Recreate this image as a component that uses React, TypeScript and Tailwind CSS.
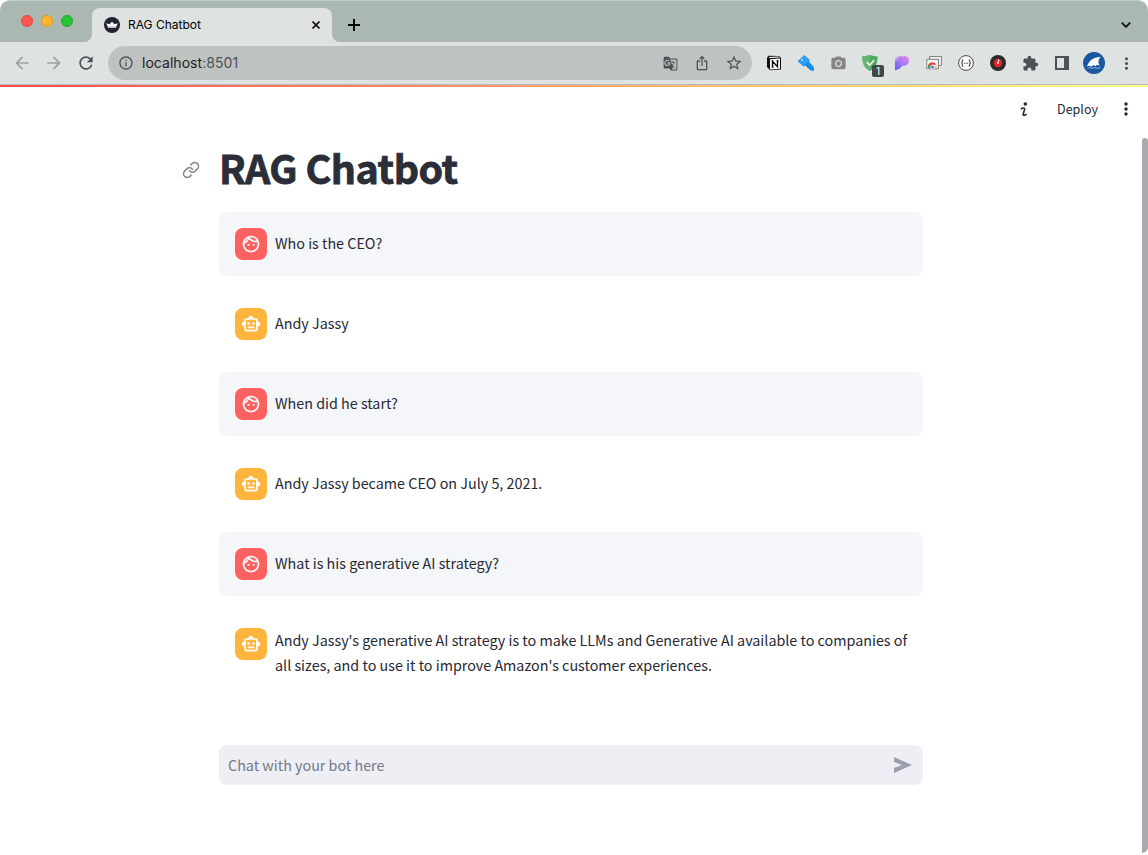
import React from "react";
import {
  MdArrowBack,
  MdArrowForward,
  MdExtension,
  MdGTranslate,
  MdInfoOutline,
  MdIosShare,
  MdMoreVert,
  MdOutlineFace,
  MdOutlineSmartToy,
  MdPhotoCamera,
  MdRefresh,
  MdStarBorder,
} from "react-icons/md";

type Message = {
  role: "user" | "assistant";
  text: string;
};

const messages: Message[] = [
  { role: "user", text: "Who is the CEO?" },
  { role: "assistant", text: "Andy Jassy" },
  { role: "user", text: "When did he start?" },
  { role: "assistant", text: "Andy Jassy became CEO on July 5, 2021." },
  { role: "user", text: "What is his generative AI strategy?" },
  {
    role: "assistant",
    text: "Andy Jassy's generative AI strategy is to make LLMs and Generative AI available to companies of all sizes, and to use it to improve Amazon's customer experiences.",
  },
];

const Cell: React.FC<{ children: React.ReactNode }> = ({ children }) => (
  <div className="flex h-8 w-8 shrink-0 items-center justify-center">
    {children}
  </div>
);

const TabStrip: React.FC = () => (
  <div className="flex h-[42px] shrink-0 items-end rounded-t-[10px] border-t border-[#c3cdc8] bg-[#abb8b1]">
    <div className="flex h-[41px] w-[92px] items-center gap-2 pb-px pl-[21px]">
      <span className="h-3 w-3 rounded-full border border-[#e2463f] bg-[#ff5650]" />
      <span className="h-3 w-3 rounded-full border border-[#e09a1f] bg-[#ffb429]" />
      <span className="h-3 w-3 rounded-full border border-[#1fa82c] bg-[#28c137]" />
    </div>

    {/* Active tab */}
    <div className="relative flex h-[34px] w-[240px] items-center rounded-t-lg bg-[#dee2e0] pl-3">
      <svg className="absolute bottom-0 -left-2 h-2 w-2" viewBox="0 0 8 8">
        <path d="M8 0v8H0a8 8 0 0 0 8-8z" fill="#dee2e0" />
      </svg>
      <svg className="absolute -right-2 bottom-0 h-2 w-2" viewBox="0 0 8 8">
        <path d="M0 0v8h8a8 8 0 0 1-8-8z" fill="#dee2e0" />
      </svg>
      <svg className="h-4 w-4" viewBox="0 0 16 16">
        <circle cx="8" cy="8" r="8" fill="#22252e" />
        <path
          d="M2.3 6.2 5.4 7.2 8 4.7l2.6 2.5 3.1-1-1.8 4.6H4.1z"
          fill="#fff"
        />
        <path d="M4 9.3h8l-.5 1.6h-7z" fill="#c4c8cb" />
      </svg>
      <span className="ml-2 flex-1 text-[12px] text-black">RAG Chatbot</span>
      <svg className="mr-3 h-2 w-2" viewBox="0 0 8 8">
        <path d="m.5.5 7 7m0-7-7 7" stroke="#111" strokeWidth="1.6" />
      </svg>
    </div>

    <div className="flex h-[34px] flex-1 items-center justify-between pr-[17px] pl-4">
      <svg className="h-3 w-3" viewBox="0 0 12 12">
        <path d="M6 0v12M0 6h12" stroke="#000" strokeWidth="2" />
      </svg>
      <svg className="h-[6px] w-[10px]" viewBox="0 0 10 6">
        <path d="m.8.7 4.2 4.2L9.2.7" fill="none" stroke="#111" strokeWidth="1.8" />
      </svg>
    </div>
  </div>
);

const Extensions: React.FC = () => (
  <div className="ml-[6px] flex">
    <Cell>
      <svg className="h-4 w-4" viewBox="0 0 16 16">
        <path d="M1 2.4 2.6.8 13 1l2 2v11.5l-11 .8L1 12z" fill="#111" />
        <path d="M4 4.2 14 3.6v10.2l-10 .6z" fill="#fff" />
        <path d="m2.4 1.9 9.8-.4 1.4.9L4 3z" fill="#fff" />
        <path
          d="M6.5 12V6.2l5 5.5V5.8M5.6 6h1.8M10.6 5.8h1.9M5.6 12.1h2"
          fill="none"
          stroke="#111"
          strokeWidth="1.4"
        />
      </svg>
    </Cell>
    <Cell>
      <svg className="h-4 w-4" viewBox="0 0 16 16">
        <path d="M6.2.2 11.8 5l-.8 2 4.800 5 .2 3.800-3.400-.4-5.200-5-1.800 1L-.2 6.300z" fill="#1487dd" />
        <path d="M6.2.2 11.6 5 5.5 11-.2 6.300z" fill="#2aa0f5" />
        <path d="m9.500 8.300 5.800 5.900" stroke="#1f97ee" strokeWidth="1.400" />
        <circle cx="4" cy="5" r=".9" fill="#dee2e0" />
      </svg>
    </Cell>
    <Cell>
      <MdPhotoCamera className="h-[17px] w-[17px] text-[#858585]" />
    </Cell>
    <div className="relative flex h-8 w-8 items-center justify-center">
      <svg className="h-4 w-4" viewBox="0 0 16 16">
        <path
          d="M8 0c2.800.8 5 1.300 7.700 1.600C15.500 8 14.200 12.800 8 16 1.800 12.800.5 8 .3 1.600 3 1.300 5.200.8 8 0z"
          fill="#4fa862"
        />
        <path d="M8 0C5.200.8 3 1.300.3 1.600.5 8 1.800 12.800 8 16z" fill="#62b56e" />
        <path d="m4.800 7.300 2.800 2.800 4.600-4.800" fill="none" stroke="#fff" strokeWidth="1.500" />
      </svg>
      <span className="absolute top-[18px] left-[18px] flex h-[12px] w-[12px] items-center justify-center rounded-[2px] bg-[#454746] text-[10px] leading-none text-white">
        1
      </span>
    </div>
    <Cell>
      <svg className="h-4 w-4" viewBox="0 0 16 16">
        <defs>
          <linearGradient id="petal" x1="0" y1="1" x2="1" y2="0">
            <stop offset="0" stopColor="#5b5cf5" />
            <stop offset=".5" stopColor="#a678f6" />
            <stop offset="1" stopColor="#f28be0" />
          </linearGradient>
        </defs>
        <path
          d="M1 5.500 6 1.200c1.200-.4 2 0 2.500.8C10 .5 12 .5 13 2c1.700.5 2.500 2.200 1.800 3.800.5 1.800-.6 3.500-2.400 3.900-1 1.200-2.700 1.500-4 .9L6 13.500 1 15.500z"
          fill="url(#petal)"
        />
        <path d="m1 4 4-3M1 7l4-3" stroke="#c58cf2" strokeWidth="1" />
      </svg>
    </Cell>
    <Cell>
      <svg className="h-4 w-4" viewBox="0 0 16 16">
        <path d="M3.500 1.500h12v9h-3v-6h-9z" fill="#eee" stroke="#858585" />
        <path d="M.8 4.300h11.700v9.500H.8z" fill="#f5f5f5" stroke="#858585" />
        <path d="M2.500 13.300a4.300 4.300 0 0 1 2-5.600 4.300 4.300 0 0 1 5.800 2H6.500z" fill="#df4637" />
        <path d="M2.500 13.300a4.300 4.300 0 0 1 .3-4l2.600 4z" fill="#2fa255" />
        <path d="M8.500 13.300 10.300 9.700a4.300 4.300 0 0 1 .2 3.600z" fill="#f6c12b" />
        <circle cx="6.600" cy="12" r="1.900" fill="#437fe8" stroke="#fff" strokeWidth=".7" />
      </svg>
    </Cell>
    <Cell>
      <svg className="h-4 w-4" viewBox="0 0 16 16">
        <circle cx="8" cy="8" r="7.400" fill="#fff" stroke="#454545" />
        <path
          d="M5.300 4.800c-1.200 0-1 .6-1 1.700 0 .9-.3 1.500-1.100 1.500.8 0 1.100.6 1.100 1.500 0 1.100-.2 1.700 1 1.700M10.700 4.800c1.200 0 1 .6 1 1.700 0 .9.300 1.500 1.100 1.500-.8 0-1.100.6-1.100 1.500 0 1.100.2 1.700-1 1.700M6 8.300h1m.600 0h1m.600 0h1"
          fill="none"
          stroke="#444"
          strokeWidth="1.100"
        />
      </svg>
    </Cell>
    <Cell>
      <svg className="h-4 w-4" viewBox="0 0 16 16">
        <circle cx="8" cy="8" r="8" fill="#2b2b2b" />
        <circle cx="8" cy="8" r="4.300" fill="#e8221f" />
        <path d="M8.400 7.500V4.700l1 .8" fill="none" stroke="#fff" strokeWidth=".9" />
        <circle cx="7.900" cy="8" r=".9" fill="#fff" />
      </svg>
    </Cell>
    <Cell>
      <MdExtension className="h-[17px] w-[17px] text-[#4c5157]" />
    </Cell>
    <Cell>
      <svg className="h-[14px] w-[14px]" viewBox="0 0 14 14">
        <path d="M0 0h14v14H0zM2 2v10h7V2z" fill="#4c5157" fillRule="evenodd" />
      </svg>
    </Cell>
    <Cell>
      <svg className="h-[22px] w-[22px]" viewBox="0 0 22 22">
        <circle cx="11" cy="11" r="11" fill="#1a579f" />
        <path d="M4 14.300C6 9 9.500 5.300 17.500 5c-2.500 2.800-2.800 6-.5 9.300-1.500-1.800-3-1.600-4.500 0-1.300-1.400-2.500-1.400-4 .4-1.300-1.200-2.800-1.200-4.500-.4z" fill="#fff" />
        <path d="m4.500 16.200 2-.6 2.800.8 2.800-.8 2.700.8 2.700-.8" fill="none" stroke="#b9cfe8" strokeWidth=".8" />
      </svg>
    </Cell>
    <Cell>
      <MdMoreVert className="h-[19px] w-[19px] text-[#4c5157]" />
    </Cell>
  </div>
);

const Toolbar: React.FC = () => (
  <div className="flex h-[42px] shrink-0 items-center bg-[#dee2e0] pl-[6px] text-[#4c5157]">
    <Cell>
      <MdArrowBack className="h-5 w-5 text-[#9da2a1]" />
    </Cell>
    <Cell>
      <MdArrowForward className="h-5 w-5 text-[#9da2a1]" />
    </Cell>
    <Cell>
      <MdRefresh className="h-5 w-5" />
    </Cell>
    <div className="ml-[6px] flex h-[34px] w-[644px] items-center rounded-full bg-[#bec3c1] pr-[2px] pl-[10px]">
      <MdInfoOutline className="h-4 w-4" />
      <span className="ml-2 flex-1 pb-px text-[14px] tracking-[0.04px] text-[#4c5157]">
        <span className="text-[#1f2224]">localhost</span>:8501
      </span>
      <Cell>
        <MdGTranslate className="h-[15px] w-[15px]" />
      </Cell>
      <Cell>
        <MdIosShare className="h-4 w-4" />
      </Cell>
      <Cell>
        <MdStarBorder className="h-[18px] w-[18px]" />
      </Cell>
    </div>
    <Extensions />
  </div>
);

const ChatMessage: React.FC<{ message: Message }> = ({ message }) => {
  const isUser = message.role === "user";

  return (
    <div
      className={`flex items-start gap-2 rounded-lg py-4 pr-3 pl-4 ${
        isUser ? "bg-[#f5f6fa]" : ""
      }`}
    >
      <div
        className={`flex h-8 w-8 shrink-0 items-center justify-center rounded-lg text-white ${
          isUser ? "bg-[#ff6060]" : "bg-[#ffb53d]"
        }`}
      >
        {isUser ? (
          <MdOutlineFace className="h-5 w-5" />
        ) : (
          <MdOutlineSmartToy className="h-5 w-5" />
        )}
      </div>
      <p
        className={`text-[14.33px] leading-[25px] ${
          message.text.length > 90 ? "-mt-px" : "pt-[2px]"
        }`}
      >
        {message.text}
      </p>
    </div>
  );
};

const App: React.FC = () => {
  return (
    <div className="flex h-[855px] w-[1148px] flex-col overflow-hidden bg-white font-['Inter','Roboto',sans-serif]">
      <TabStrip />
      <Toolbar />
      <div className="h-px shrink-0 bg-[#b5bdc5]" />
      <div className="h-[2px] shrink-0 bg-linear-to-r/srgb from-[#ff4b4b] to-[#fffd80]" />

      {/* Page */}
      <div className="relative flex-1 font-['Noto_Sans_CJK_SC','Noto_Sans',sans-serif] text-[#262833]">
        <div className="flex h-[46px] items-center justify-end pr-3 pb-[2px]">
          <svg className="mr-[29px] h-[15px] w-2" viewBox="0 0 8 15">
            <circle cx="5.300" cy="2" r="1.800" fill="#262833" />
            <path
              d="M.8 7.300c1.700-1.700 4.300-1.700 3.800.2L3.200 12c-.4 1.900 1.600 1.600 3.400.2"
              fill="none"
              stroke="#262833"
              strokeWidth="1.600"
            />
          </svg>
          <span className="mr-[18px] text-[12.54px] leading-5">Deploy</span>
          <MdMoreVert className="h-5 w-5" />
        </div>

        <div className="ml-[219px] w-[704px]">
          <div className="relative h-[79px] pt-[9px]">
            <svg
              className="absolute top-[28px] -left-[37px] h-[18px] w-[18px]"
              viewBox="0 0 24 24"
              fill="none"
              stroke="#85868f"
              strokeWidth="2"
              strokeLinecap="round"
            >
              <path d="M10 13a5 5 0 0 0 7.540.540l3-3a5 5 0 0 0-7.070-7.070l-1.720 1.710" />
              <path d="M14 11a5 5 0 0 0-7.540-.540l-3 3a5 5 0 0 0 7.070 7.070l1.710-1.710" />
            </svg>
            <h1 className="text-[39.4px] leading-[50px] font-bold tracking-[-0.5px] text-[#2b2d38] [-webkit-text-stroke:0.8px_#2b2d38]">
              RAG Chatbot
            </h1>
          </div>

          <div className="flex flex-col gap-4">
            {messages.map((message, index) => (
              <ChatMessage key={index} message={message} />
            ))}
          </div>

          {/* Chat input */}
          <div className="mt-[52px] flex h-10 items-center justify-between rounded-lg bg-[#eeeff5] pr-[11px] pl-[9px]">
            <span className="text-[14.33px] leading-6 text-[#757786]">
              Chat with your bot here
            </span>
            <svg className="h-4 w-[18px]" viewBox="0 0 18 16">
              <path d="M0 0 18 8 0 16V11l8-3-8-3z" fill="#9b9eae" />
            </svg>
          </div>
        </div>

        {/* Scrollbar */}
        <div className="absolute top-[51px] right-0 bottom-[2px] w-[6px] rounded-t-[3px] rounded-br-[6px] bg-[#a9aaae]" />
      </div>
    </div>
  );
};

export default App;
